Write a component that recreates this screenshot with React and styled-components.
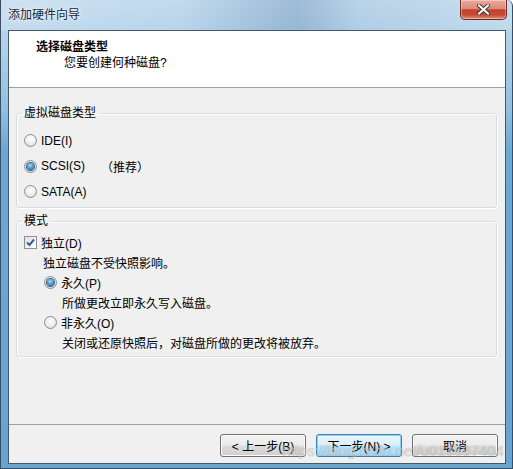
import React from 'react';
import styled, { createGlobalStyle } from 'styled-components';

const GlobalStyle = createGlobalStyle`
  html, body { margin: 0; padding: 0; background: #ffffff; }
  * { box-sizing: border-box; }
`;

const uiFont = `"Liberation Sans", "Noto Sans CJK SC", sans-serif`;

const Window = styled.div`
  width: 513px;
  height: 469px;
  display: flex;
  flex-direction: column;
  border-left: 1px solid #3a4e63;
  border-right: 1px solid #3a4e63;
  border-bottom: 1px solid #3a4e63;
  border-radius: 0 6px 0 0;
  background: linear-gradient(180deg, #c3dbee 0px, #abcde6 60px, #8fc0e0 110px, #6ba9d4 150px, #66a5d2 100%);
  font-family: ${uiFont};
  font-size: 12px;
  color: #000;
  overflow: hidden;
`;

const TitleBar = styled.div`
  height: 30px;
  flex: none;
  display: flex;
  align-items: flex-start;
  justify-content: space-between;
  padding-left: 7px;
  background: linear-gradient(90deg,
    rgba(255, 255, 255, 0.18) 0%,
    rgba(255, 255, 255, 0) 35%,
    rgba(30, 80, 130, 0.22) 58%,
    rgba(30, 80, 130, 0.05) 70%,
    rgba(255, 255, 255, 0.12) 100%);
`;

const TitleText = styled.div`
  line-height: 30px;
  font-size: 12px;
  color: #15263a;
  text-shadow: 0 0 6px rgba(255, 255, 255, 0.9), 0 0 2px rgba(255, 255, 255, 0.9);
`;

const CloseButton = styled.div`
  width: 47px;
  height: 20px;
  margin-right: 5px;
  border: 1px solid #6b2b22;
  border-top: none;
  border-radius: 0 0 5px 5px;
  background: linear-gradient(180deg, #e9ab9c 0%, #dc8a76 45%, #c4412c 52%, #c64b37 78%, #df8f78 100%);
  box-shadow: inset 0 0 0 1px rgba(255, 255, 255, 0.35);
  display: grid;
  place-items: center;
`;

const Client = styled.div`
  flex: 1;
  margin: 0 6px 4px 7px;
  border: 1px solid #43586e;
  display: flex;
  flex-direction: column;
  background: #f0f0f0;
`;

const Header = styled.div`
  height: 57px;
  flex: none;
  background: #ffffff;
  border-bottom: 1px solid #a0a0a0;
  padding: 8px 0 0 27px;
`;

const HeaderTitle = styled.div`
  font-weight: bold;
  font-size: 12px;
  line-height: 16px;
`;

const HeaderSub = styled.div`
  line-height: 16px;
  padding-left: 28px;
`;

const Body = styled.div`
  flex: 1;
  padding: 18px 8px 0 7px;
`;

const Group = styled.fieldset`
  margin: ${p => p.$top || 0}px 0 0 0;
  padding: ${p => p.$padTop}px 7px ${p => p.$padBottom}px 5px;
  border: 1px solid #d5dfe5;
  border-radius: 3px;
  box-shadow: inset 1px 1px 0 #ffffff, 1px 1px 0 #ffffff;
  min-width: 0;
`;

const Legend = styled.legend`
  padding: 0 2px;
  line-height: 14px;
  font-size: 12px;
`;

const Row = styled.div`
  display: flex;
  align-items: center;
  height: ${p => p.$h || 20}px;
  padding-left: ${p => p.$indent || 0}px;
  white-space: nowrap;
`;

const RadioCircle = styled.span`
  width: 13px;
  height: 13px;
  flex: none;
  border-radius: 50%;
  border: 1px solid #8d8d8d;
  background: radial-gradient(circle at 50% 35%, #ffffff 0%, #ececec 55%, #d4d4d4 100%);
  display: grid;
  place-items: center;
  margin-right: 4px;
  margin-left: 2px;

  &::after {
    content: '';
    display: ${p => (p.$checked ? 'block' : 'none')};
    width: 7px;
    height: 7px;
    border-radius: 50%;
    background: radial-gradient(circle at 45% 35%, #b4e2f8 0%, #4b9ad0 45%, #175c95 100%);
    box-shadow: 0 0 0 1px #2a5a88;
  }
`;

const CheckBoxBox = styled.span`
  width: 13px;
  height: 13px;
  flex: none;
  border: 1px solid #8e8f8f;
  background: linear-gradient(135deg, #dcdcdc 0%, #f4f4f4 60%, #ffffff 100%);
  display: grid;
  place-items: center;
  margin-left: 2px;
  margin-right: 4px;
`;

const Hint = styled.span`
  margin-left: 16px;
`;

const Footer = styled.div`
  position: relative;
  flex: none;
  border-top: 1px solid #a0a0a0;
  padding: 9px 7px 6px 0;
  display: flex;
  justify-content: flex-end;
  gap: 10px;
`;

const Button = styled.div`
  width: 86px;
  height: 23px;
  border: 1px solid ${p => (p.$default ? '#3c7fb1' : '#707070')};
  border-radius: 3px;
  background: ${p =>
    p.$default
      ? 'linear-gradient(180deg, #eaf6fd 0%, #d9f0fc 48%, #bee6fd 52%, #a7d9f5 100%)'
      : 'linear-gradient(180deg, #f2f2f2 0%, #ebebeb 48%, #dddddd 52%, #cfcfcf 100%)'};
  box-shadow: inset 0 0 0 1px ${p => (p.$default ? '#8fd0f3' : '#fcfcfc')};
  display: flex;
  align-items: center;
  justify-content: center;
  font-size: 12px;
  white-space: nowrap;
`;

const Watermark = styled.div`
  position: absolute;
  right: 1px;
  bottom: 4px;
  font-family: "Liberation Sans", sans-serif;
  font-size: 15px;
  color: rgba(255, 255, 255, 0.55);
  text-shadow: 0 0 1px rgba(0, 0, 0, 0.35);
  pointer-events: none;
  white-space: nowrap;
`;

const Radio = ({ checked, label, extra, indent, h }) => (
  <Row $indent={indent} $h={h}>
    <RadioCircle $checked={checked} />
    <span>{label}</span>
    {extra && <Hint>{extra}</Hint>}
  </Row>
);

export default function App() {
  return (
    <>
      <GlobalStyle />
      <Window>
        <TitleBar>
          <TitleText>添加硬件向导</TitleText>
          <CloseButton>
            <svg width="13" height="11" viewBox="0 0 13 11">
              <path d="M2 1.5 L11 9.5 M11 1.5 L2 9.5" stroke="#3b3b3b" strokeWidth="4" strokeLinecap="square" />
              <path d="M2 1.5 L11 9.5 M11 1.5 L2 9.5" stroke="#ffffff" strokeWidth="2" strokeLinecap="square" />
            </svg>
          </CloseButton>
        </TitleBar>
        <Client>
          <Header>
            <HeaderTitle>选择磁盘类型</HeaderTitle>
            <HeaderSub>您要创建何种磁盘?</HeaderSub>
          </Header>
          <Body>
            <Group $padTop={8} $padBottom={3}>
              <Legend>虚拟磁盘类型</Legend>
              <Radio label="IDE(I)" h={25} />
              <Radio label="SCSI(S)" extra="（推荐）" checked h={26} />
              <Radio label="SATA(A)" h={25} />
            </Group>
            <Group $top={6} $padTop={4} $padBottom={4}>
              <Legend>模式</Legend>
              <Row>
                <CheckBoxBox>
                  <svg width="9" height="9" viewBox="0 0 9 9">
                    <path d="M1 4.5 L3.5 7 L8 1.5" stroke="#3d5aa0" strokeWidth="2" fill="none" />
                  </svg>
                </CheckBoxBox>
                <span>独立(D)</span>
              </Row>
              <Row $indent={21}>独立磁盘不受快照影响。</Row>
              <Radio label="永久(P)" checked indent={20} />
              <Row $indent={40}>所做更改立即永久写入磁盘。</Row>
              <Radio label="非永久(O)" indent={20} />
              <Row $indent={40}>关闭或还原快照后，对磁盘所做的更改将被放弃。</Row>
            </Group>
          </Body>
          <Footer>
            <Button>&lt; 上一步(B)</Button>
            <Button $default>下一步(N) &gt;</Button>
            <Button>取消</Button>
            <Watermark>https://blog.csdn.net/u013597404</Watermark>
          </Footer>
        </Client>
      </Window>
    </>
  );
}
